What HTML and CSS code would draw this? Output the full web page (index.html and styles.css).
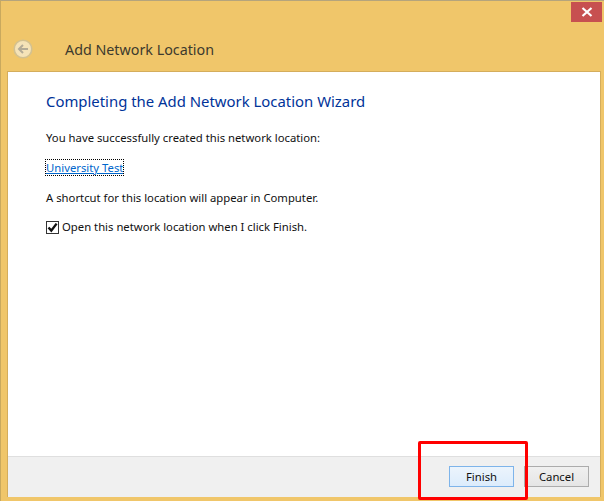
FILE: index.html
```html
<!DOCTYPE html>
<html lang="en">
<head>
<meta charset="utf-8">
<title>Add Network Location</title>
<link rel="stylesheet" href="styles.css">
</head>
<body>
<div class="window">
  <div class="titlebar">
    <div class="close"><svg width="12" height="10" viewBox="0 0 12 10"><path d="M1.5 1 L10.5 9 M10.5 1 L1.5 9" stroke="#fff" stroke-width="2.2" fill="none"/></svg></div>
    <div class="nav">
      <svg class="back" width="20" height="20" viewBox="0 0 20 20"><circle cx="10" cy="10" r="8.8" fill="#f5e3b8" stroke="#d3c190" stroke-width="1.6"/><path d="M15 10 H6.5 M10 6 L6 10 L10 14" fill="none" stroke="#b3ab96" stroke-width="2"/></svg>
      <span class="wintitle">Add Network Location</span>
    </div>
  </div>
  <div class="client">
    <main class="content">
      <h1 class="heading">Completing the Add Network Location Wizard</h1>
      <p class="line first">You have successfully created this network location:</p>
      <p class="line linkrow"><a class="link" href="#">University Test</a></p>
      <p class="line shortcut">A shortcut for this location will appear in Computer.</p>
      <label class="line check"><span class="box"><svg width="11" height="11" viewBox="0 0 11 11"><path d="M1.5 5.5 L4.3 8.6 L9.6 1.6" fill="none" stroke="#111" stroke-width="2.4"/></svg></span>Open this network location when I click Finish.</label>
    </main>
    <footer class="footer">
      <button class="btn primary">Finish</button>
      <button class="btn">Cancel</button>
    </footer>
  </div>
  <div class="highlight"></div>
</div>
</body>
</html>
```
FILE: styles.css
```css
html, body { margin: 0; padding: 0; }
body { width: 604px; height: 501px; overflow: hidden; font-family: "Noto Sans", "Open Sans", sans-serif; }
.window { position: relative; box-sizing: border-box; width: 604px; height: 501px; background: #f0c66a; border-top: 1px solid #b5a47c; border-left: 1px solid #c9a95e; display: flex; flex-direction: column; padding: 0 3px 4px 6px; }
.titlebar { height: 70px; flex: none; display: flex; flex-direction: column; }
.close { align-self: flex-end; width: 31px; height: 20px; margin-top: 1px; margin-right: -1px; background: #c75050; display: flex; align-items: center; justify-content: center; }
.nav { display: flex; align-items: center; margin-top: 17px; padding-left: 6px; }
.back { flex: none; }
.wintitle { margin-left: 32px; font-size: 14.3px; color: #3d3a2e; white-space: nowrap; }
.client { flex: 1; min-height: 0; display: flex; flex-direction: column; background: #fff; border-top: 1px solid #d4ad5c; border-left: 1px solid #d4ad5c; border-right: 1px solid #d4ad5c; }
.content { flex: 1; min-height: 0; padding: 19px 38px 0; display: flex; flex-direction: column; align-items: flex-start; }
.heading { margin: 0; font-size: 14.9px; line-height: 20px; font-weight: 400; color: #003399; white-space: nowrap; }
.line { margin: 0; font-size: 11.3px; line-height: 16px; color: #111; white-space: nowrap; }
.first { margin-top: 19px; }
.linkrow { margin-top: 14px; }
.link { color: #0066cc; text-decoration: underline; outline: 1px dotted #000; outline-offset: 0; }
.shortcut { margin-top: 14px; }
.check { margin-top: 13px; display: flex; align-items: center; gap: 3px; }
.box { box-sizing: border-box; width: 13px; height: 13px; border: 1px solid #333; background: #fff; display: flex; align-items: center; justify-content: center; }
.footer { flex: none; box-sizing: border-box; height: 41px; background: #f0f0f0; border-top: 1px solid #dfdfdf; display: flex; justify-content: flex-end; align-items: center; gap: 10px; padding: 0 11px 2px 0; }
.btn { box-sizing: border-box; width: 65px; height: 21px; padding: 0; font: inherit; font-size: 11.3px; color: #111; background: linear-gradient(#f0f0f0, #e5e5e5); border: 1px solid #acacac; }
.btn.primary { background: linear-gradient(#ecf4fc, #dcecfc); border-color: #7eb4ea; }
.highlight { position: absolute; left: 417px; top: 440px; width: 110px; height: 59px; box-sizing: border-box; border: 3px solid #f00; border-radius: 2px; }
```
